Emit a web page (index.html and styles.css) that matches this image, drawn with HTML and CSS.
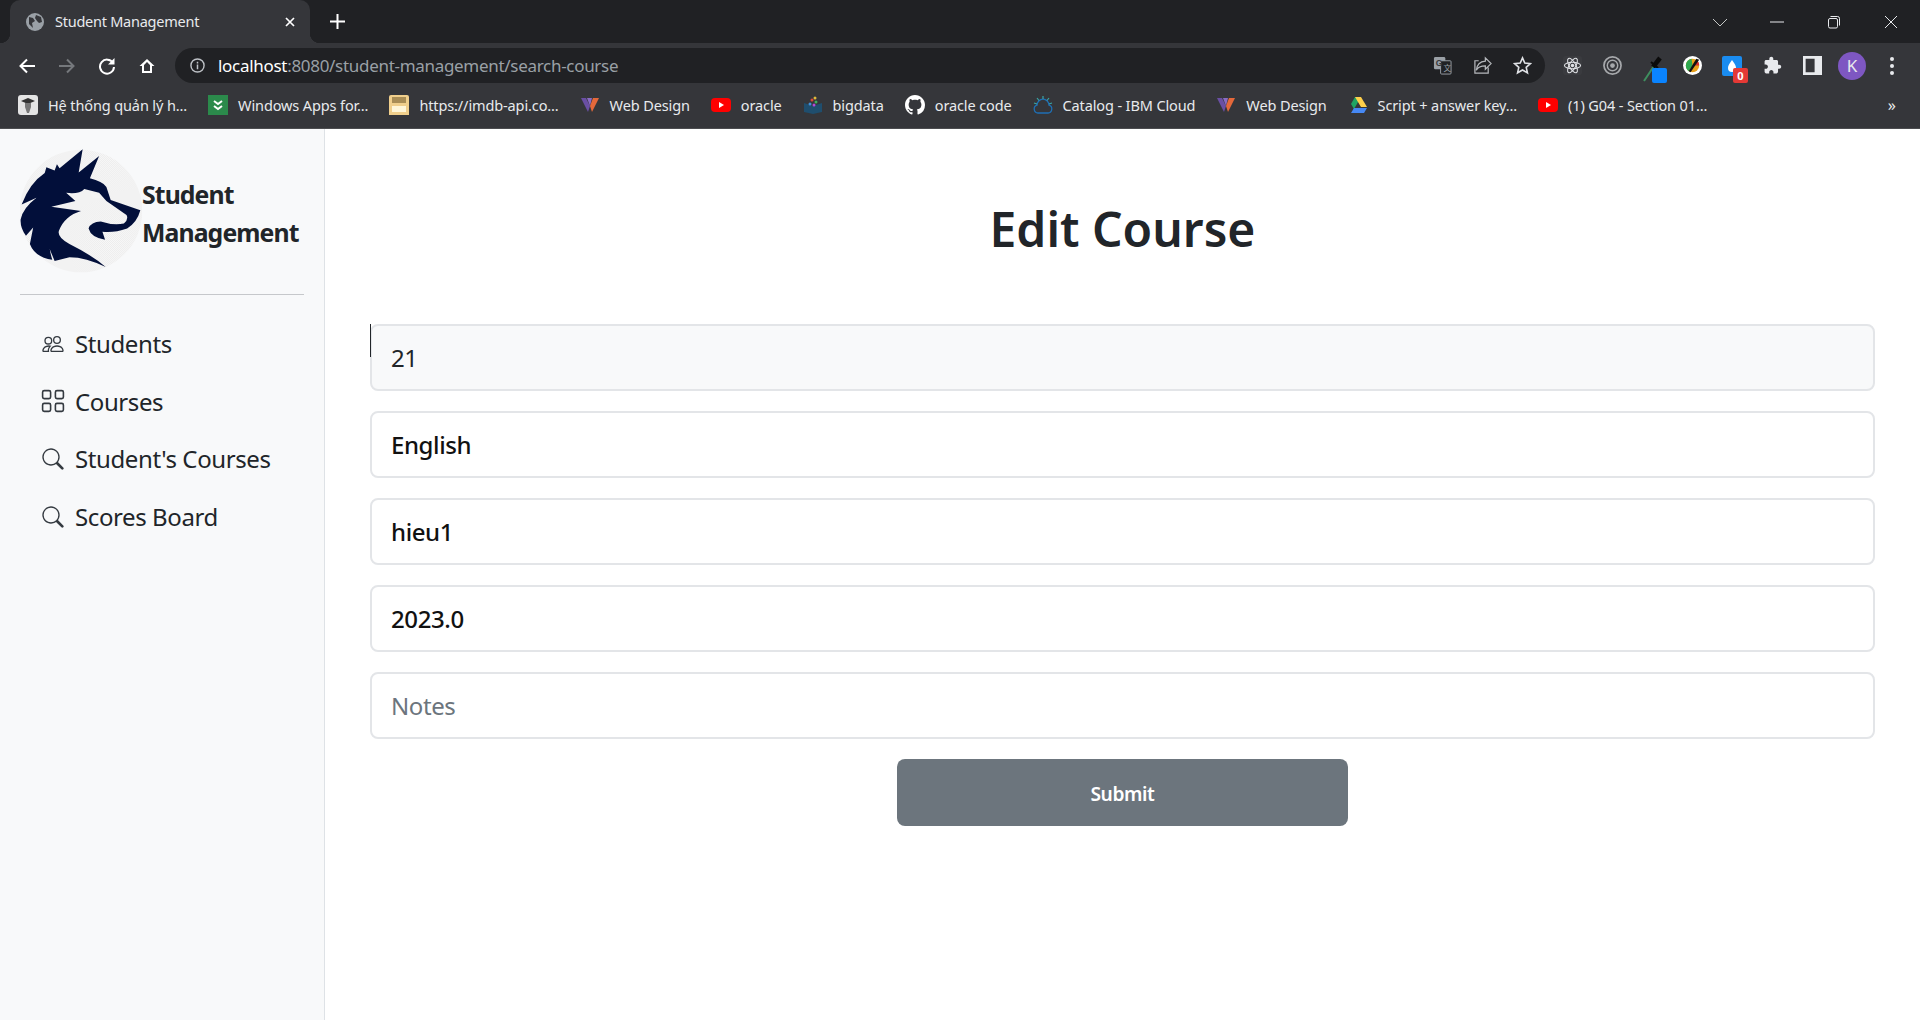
FILE: index.html
```html
<!DOCTYPE html>
<html lang="en">
<head>
<meta charset="utf-8">
<title>Student Management</title>
<link rel="stylesheet" href="styles.css">
</head>
<body>
<header class="chrome">
  <div class="tabstrip">
    <div class="tab">
      <svg class="tab-globe" viewBox="0 0 18 18"><circle cx="9" cy="9" r="9" fill="#9aa0a6"/><path d="M3 4l4 1 2 3-3 2 1 5-4-4zM10 2l5 2 1 5-3 1-2-2-2-3z" fill="#35363a"/></svg>
      <span class="tab-title">Student Management</span>
      <svg class="tab-close" viewBox="0 0 10 10"><path d="M1 1l8 8M9 1l-8 8" stroke="#fff" stroke-width="1.7"/></svg>
    </div>
    <svg class="new-tab" viewBox="0 0 15 15"><path d="M7.5 0v15M0 7.5h15" stroke="#fff" stroke-width="2"/></svg>
    <div class="win-controls">
      <span class="win-slot"><svg class="win-ico" viewBox="0 0 14 14"><path d="M0 4l7 7 7-7" fill="none" stroke="#c4c7c5"/></svg></span>
      <span class="win-slot"><svg class="win-ico" viewBox="0 0 14 14"><path d="M0 7h14" stroke="#e8eaed"/></svg></span>
      <span class="win-slot"><svg class="win-ico" viewBox="0 0 14 14"><rect x="1.500" y="3.500" width="9" height="9.500" rx="1.500" fill="none" stroke="#e8eaed"/><path d="M3.500 1.500h7a2 2 0 0 1 2 2v7" fill="none" stroke="#e8eaed"/></svg></span>
      <span class="win-slot"><svg class="win-ico" viewBox="0 0 14 14"><path d="M1 1l12 12M13 1l-12 12" stroke="#e8eaed"/></svg></span>
    </div>
  </div>
  <div class="toolbar">
    <span class="slot"><svg class="nav-ico" viewBox="0 0 18 18"><path d="M17 9H3M9 2.500L2.500 9 9 15.500" fill="none" stroke="#fff" stroke-width="2"/></svg></span>
    <span class="slot"><svg class="nav-ico" viewBox="0 0 18 18"><path d="M1 9h14M9 2.500L15.500 9 9 15.500" fill="none" stroke="#75787c" stroke-width="2"/></svg></span>
    <span class="slot"><svg class="nav-ico" viewBox="0 0 18 18"><path d="M15 6a7 7 0 1 0 1 4" fill="none" stroke="#fff" stroke-width="2"/><path d="M16.500 1v6.500H10z" fill="#fff"/></svg></span>
    <span class="slot"><svg class="nav-ico" viewBox="0 0 18 18"><path d="M9 2L1.500 9H4v7h10V9h2.500zM6 14V8l3-3 3 3v6z" fill="#fff" fill-rule="evenodd"/></svg></span>
    <div class="omnibox">
      <svg class="info" viewBox="0 0 16 16"><circle cx="8" cy="8" r="7" fill="none" stroke="#bdc1c6" stroke-width="1.500"/><path d="M8 7v5M8 4v1.800" stroke="#bdc1c6" stroke-width="1.600"/></svg>
      <span class="url"><span class="url-host">localhost</span>:8080/student-management/search-course</span>
      <span class="omni-end">
        <span class="slot"><svg class="omni-ico" viewBox="0 0 20 20"><rect x="1" y="1" width="12" height="13" rx="1.500" fill="#9aa0a6"/><rect x="8" y="5" width="11" height="14" rx="1" fill="#202124" stroke="#9aa0a6"/><text class="ico-g" x="3" y="11">G</text><text class="ico-t" x="11" y="16">文</text></svg></span>
        <span class="slot"><svg class="omni-ico" viewBox="0 0 20 20"><path d="M13 2l6 6-6 6v-3.500C8 10.500 5 12 3.500 15 4 10 7 6 13 5.500zM16 12v6H2V5h4" fill="none" stroke="#b5b8bc" stroke-width="1.300"/></svg></span>
        <span class="slot"><svg class="omni-ico" viewBox="0 0 20 20"><path d="M10 2l2.400 5.400 5.900.6-4.400 3.900 1.300 5.800L10 14.700l-5.200 3 1.300-5.800L1.700 8l5.900-.6z" fill="none" stroke="#dfe1e5" stroke-width="1.700"/></svg></span>
      </span>
    </div>
    <span class="slot first-ext"><svg class="ext-ico" viewBox="0 0 20 20"><rect width="20" height="20" rx="3" fill="#3a3b3f"/><g fill="none" stroke="#dfe1e5" stroke-width="1.100"><ellipse cx="10" cy="10" rx="8.500" ry="3.400"/><ellipse cx="10" cy="10" rx="8.500" ry="3.400" transform="rotate(60 10 10)"/><ellipse cx="10" cy="10" rx="8.500" ry="3.400" transform="rotate(120 10 10)"/></g><circle cx="10" cy="10" r="1.800" fill="#dfe1e5"/></svg></span>
    <span class="slot"><svg class="ext-ico" viewBox="0 0 20 20"><g fill="none" stroke="#a6a8ab"><circle cx="10" cy="10" r="9" stroke-width="1.800"/><circle cx="10" cy="10" r="5.500" stroke-width="1.500"/></g><circle cx="10" cy="10" r="2.500" fill="#a6a8ab"/></svg></span>
    <span class="slot"><svg class="dropper" viewBox="0 0 24 28"><path d="M1 25L11 10" stroke="#3f8f5f" stroke-width="2"/><path d="M10 11l7-9" stroke="#0b0b0b" stroke-width="4.500"/><path d="M8 6l7 6" stroke="#0b0b0b" stroke-width="2"/><rect x="9" y="12" width="15" height="15" rx="2" fill="#0a84ff"/></svg></span>
    <span class="slot"><svg class="ext-ico" viewBox="0 0 20 20"><circle cx="10" cy="10" r="10" fill="#fff"/><circle cx="10" cy="10" r="7" fill="#e9a019"/><path d="M3 10a7 7 0 0 1 6-7l1 7-4 6a7 7 0 0 1-3-6z" fill="#2fa84f"/><path d="M10 10l4-6a7 7 0 0 1 3 6z" fill="#d92f2f"/><path d="M6 16l8-13 3 1-9 13z" fill="#111"/></svg></span>
    <span class="slot"><span class="drop-wrap"><svg class="drop-ico" viewBox="0 0 20 20"><rect width="20" height="20" rx="2" fill="#1a8cf0"/><path d="M10 4c3 4 4 6 4 8a4 4 0 0 1-8 0c0-2 1-4 4-8z" fill="#fff"/></svg><span class="badge">0</span></span></span>
    <span class="slot"><svg class="ext-ico" viewBox="0 0 24 24"><path d="M20.500 11H19V7c0-1.100-.9-2-2-2h-4V3.500C13 2.120 11.880 1 10.500 1S8 2.120 8 3.500V5H4c-1.100 0-1.990.9-1.990 2v3.800H3.500c1.490 0 2.700 1.210 2.700 2.700s-1.210 2.700-2.700 2.700H2V20c0 1.100.9 2 2 2h3.800v-1.500c0-1.490 1.210-2.700 2.700-2.700 1.490 0 2.700 1.210 2.700 2.700V22H17c1.100 0 2-.9 2-2v-4h1.500c1.380 0 2.500-1.120 2.500-2.500S21.880 11 20.500 11z" fill="#e8eaed"/></svg></span>
    <span class="slot"><svg class="ext-ico" viewBox="0 0 18 18"><path d="M0 0h18v18H0zM2.500 2.500v13H11v-13z" fill="#e8eaed" fill-rule="evenodd"/></svg></span>
    <span class="slot"><span class="avatar">K</span></span>
    <span class="slot"><svg class="kebab" viewBox="0 0 6 20"><circle cx="3" cy="3" r="2" fill="#e8eaed"/><circle cx="3" cy="10" r="2" fill="#e8eaed"/><circle cx="3" cy="17" r="2" fill="#e8eaed"/></svg></span>
  </div>
  <nav class="bookmarks">
    <a class="bm"><svg class="bm-ico" viewBox="0 0 20 20"><rect width="20" height="20" rx="3" fill="#e4e4e4"/><path d="M3 6l7-3 7 3-7 3z" fill="#333"/><path d="M7 8h6v4l-2 6H9l-2-6z" fill="#777"/></svg><span>Hệ thống quản lý h...</span></a>
    <a class="bm"><svg class="bm-ico" viewBox="0 0 20 20"><rect width="20" height="20" fill="#2b8a4b"/><path d="M6 6l4 3 4-3M6 11l4 3 4-3" fill="none" stroke="#fff" stroke-width="2"/></svg><span>Windows Apps for...</span></a>
    <a class="bm"><svg class="bm-ico" viewBox="0 0 20 20"><rect width="20" height="24" rx="2" fill="#f0cf8c"/><rect x="3" y="2" width="14" height="6" fill="#a98d55"/><rect x="3" y="11" width="14" height="6" fill="#fff6d8"/></svg><span>https://imdb-api.co...</span></a>
    <a class="bm"><svg class="bm-ico" viewBox="0 0 20 20"><path d="M1 3l5 0 4 8-2 6z" fill="#6a4fa3"/><path d="M7 3h5l-2 8z" fill="#8a6cc4"/><path d="M13 3h6l-7 14-2-6z" fill="#e4683a"/></svg><span>Web Design</span></a>
    <a class="bm"><svg class="bm-ico" viewBox="0 0 20 20"><rect y="3" width="20" height="14" rx="4" fill="#f00"/><path d="M8 7l5 3-5 3z" fill="#fff"/></svg><span>oracle</span></a>
    <a class="bm"><svg class="bm-ico" viewBox="0 0 20 20"><path d="M1 8l9 3 9-3v9l-9 2-9-2z" fill="#1f4e6e"/><circle cx="9" cy="5" r="1.500" fill="#d84a3a"/><circle cx="12" cy="3" r="1.500" fill="#e0b93a"/><circle cx="13" cy="7" r="1.500" fill="#3fae5a"/><circle cx="7" cy="9" r="1.500" fill="#3f8fd8"/><circle cx="11" cy="10" r="1.500" fill="#b44ad8"/></svg><span>bigdata</span></a>
    <a class="bm"><svg class="bm-ico" viewBox="0 0 16 16"><path d="M8 0C3.580 0 0 3.580 0 8c0 3.540 2.290 6.530 5.470 7.590.4.070.55-.17.55-.38 0-.19-.01-.82-.01-1.490-2.010.37-2.530-.49-2.690-.94-.09-.23-.48-.94-.82-1.130-.28-.15-.68-.52-.01-.53.630-.01 1.080.58 1.230.82.720 1.210 1.870.87 2.330.66.070-.52.280-.87.510-1.070-1.780-.2-3.640-.89-3.640-3.950 0-.87.310-1.590.820-2.150-.08-.2-.36-1.020.08-2.120 0 0 .67-.21 2.200.82.640-.18 1.320-.27 2-.27.68 0 1.360.09 2 .27 1.530-1.040 2.200-.82 2.200-.82.44 1.100.16 1.920.08 2.120.51.56.82 1.270.82 2.150 0 3.070-1.870 3.750-3.650 3.950.29.25.54.73.54 1.480 0 1.070-.01 1.930-.01 2.200 0 .21.15.46.55.38A8.013 8.013 0 0016 8c0-4.420-3.580-8-8-8z" fill="#fff"/></svg><span>oracle code</span></a>
    <a class="bm"><svg class="bm-ico" viewBox="0 0 20 20"><path d="M5 18h10a4 4 0 0 0 1-7.800A6 6 0 0 0 4 10.200 4 4 0 0 0 5 18z" fill="none" stroke="#1f6fb5" stroke-width="1.300"/><path d="M10 1v3M4 3l2 2.500M16 3l-2 2.500M1 8l3 1M19 8l-3 1" stroke="#3aa6a6" stroke-width="1.200"/></svg><span>Catalog - IBM Cloud</span></a>
    <a class="bm"><svg class="bm-ico" viewBox="0 0 20 20"><path d="M1 3l5 0 4 8-2 6z" fill="#6a4fa3"/><path d="M7 3h5l-2 8z" fill="#8a6cc4"/><path d="M13 3h6l-7 14-2-6z" fill="#e4683a"/></svg><span>Web Design</span></a>
    <a class="bm"><svg class="bm-ico" viewBox="0 0 20 20"><path d="M7 2h6l-7 12-3-5z" fill="#1fa463"/><path d="M7 2h6l6 10h-6z" fill="#ffd04b"/><path d="M6 13h13l-3 5H3z" fill="#4688f4"/></svg><span>Script + answer key...</span></a>
    <a class="bm"><svg class="bm-ico" viewBox="0 0 20 20"><rect y="3" width="20" height="14" rx="4" fill="#f00"/><path d="M8 7l5 3-5 3z" fill="#fff"/></svg><span>(1) G04 - Section 01...</span></a>
    <span class="bm-more">»</span>
  </nav>
</header>
<div class="page">
  <aside class="sidebar">
    <div class="brand">
      <svg class="logo" viewBox="60 55 370 380">
        <defs><pattern id="chk" width="6" height="6" patternUnits="userSpaceOnUse"><rect width="6" height="6" fill="#f8f8f8"/><rect width="3" height="3" fill="#ececec"/><rect x="3" y="3" width="3" height="3" fill="#ececec"/></pattern></defs>
        <circle cx="245" cy="245" r="186" fill="url(#chk)"/>
        <path d="M250 58L238 128 300 78 272 146Q310 155 322 172L335 212 425 243Q415 280 385 298 345 312 310 308L318 332Q275 325 268 298 275 278 305 277 345 290 375 283 390 270 383 257L322 215 300 190 255 178Q240 195 200 190L228 215 155 232 245 245Q195 260 178 305 172 325 210 345 280 380 320 415 260 385 210 385L165 397 150 360Q155 385 158 393 105 385 90 345L100 295 78 320Q60 295 62 270 70 235 110 205L65 225Q90 160 135 130L140 112 165 122 172 103 180 115Z" fill="#020f3a"/>
        <path d="M275 188L315 208 280 205Z" fill="#f4f4f4"/>
      </svg>
      <span class="brand-name">Student Management</span>
    </div>
    <hr class="rule">
    <ul class="menu">
      <li class="menu-item"><svg class="menu-ico" viewBox="-1 -1 18 18"><path d="M15 14s1 0 1-1-1-4-5-4-5 3-5 4 1 1 1 1h8Zm-7.978-1A.261.261 0 0 1 7 12.996c.001-.264.167-1.030.76-1.720C8.312 10.629 9.282 10 11 10c1.717 0 2.687.63 3.240 1.276.593.69.758 1.457.76 1.720l-.008.002a.274.274 0 0 1-.014.002H7.022ZM11 7a2 2 0 1 0 0-4 2 2 0 0 0 0 4Zm3-2a3 3 0 1 1-6 0 3 3 0 0 1 6 0ZM6.936 9.280a5.880 5.880 0 0 0-1.230-.247A7.350 7.350 0 0 0 5 9c-4 0-5 3-5 4 0 .667.333 1 1 1h4.216A2.238 2.238 0 0 1 5 13c0-1.010.377-2.042 1.090-2.904.243-.294.526-.569.846-.816ZM4.920 10A5.493 5.493 0 0 0 4 13H1c0-.26.164-1.030.76-1.724.545-.636 1.492-1.256 3.160-1.275ZM1.500 5.500a3 3 0 1 1 6 0 3 3 0 0 1-6 0Zm3-2a2 2 0 1 0 0 4 2 2 0 0 0 0-4Z"/></svg><span>Students</span></li>
      <li class="menu-item"><svg class="menu-ico" viewBox="0.5 0.5 15 15"><path d="M1 2.500A1.500 1.500 0 0 1 2.500 1h3A1.500 1.500 0 0 1 7 2.500v3A1.500 1.500 0 0 1 5.500 7h-3A1.500 1.500 0 0 1 1 5.500v-3zM2.500 2a.5.5 0 0 0-.5.5v3a.5.5 0 0 0 .5.5h3a.5.5 0 0 0 .5-.5v-3a.5.5 0 0 0-.5-.5h-3zm6.500.5A1.500 1.500 0 0 1 10.500 1h3A1.500 1.500 0 0 1 15 2.500v3A1.500 1.500 0 0 1 13.500 7h-3A1.500 1.500 0 0 1 9 5.500v-3zm1.500-.5a.5.5 0 0 0-.5.5v3a.5.5 0 0 0 .5.5h3a.5.5 0 0 0 .5-.5v-3a.5.5 0 0 0-.5-.5h-3zM1 10.500A1.500 1.500 0 0 1 2.500 9h3A1.500 1.500 0 0 1 7 10.500v3A1.500 1.500 0 0 1 5.500 15h-3A1.500 1.500 0 0 1 1 13.500v-3zm1.500-.5a.5.5 0 0 0-.5.5v3a.5.5 0 0 0 .5.5h3a.5.5 0 0 0 .5-.5v-3a.5.5 0 0 0-.5-.5h-3zm6.500.5A1.500 1.500 0 0 1 10.500 9h3a1.500 1.500 0 0 1 1.500 1.500v3a1.500 1.500 0 0 1-1.500 1.500h-3A1.500 1.500 0 0 1 9 13.500v-3zm1.500-.5a.5.5 0 0 0-.5.5v3a.5.5 0 0 0 .5.5h3a.5.5 0 0 0 .5-.5v-3a.5.5 0 0 0-.5-.5h-3z"/></svg><span>Courses</span></li>
      <li class="menu-item"><svg class="menu-ico" viewBox="-1 -1 18 18"><path d="M11.742 10.344a6.500 6.500 0 1 0-1.397 1.398h-.001c.03.04.062.078.098.115l3.850 3.850a1 1 0 0 0 1.415-1.414l-3.850-3.850a1.007 1.007 0 0 0-.115-.1zM12 6.500a5.500 5.500 0 1 1-11 0 5.500 5.500 0 0 1 11 0z"/></svg><span>Student's Courses</span></li>
      <li class="menu-item"><svg class="menu-ico" viewBox="-1 -1 18 18"><path d="M11.742 10.344a6.500 6.500 0 1 0-1.397 1.398h-.001c.03.04.062.078.098.115l3.850 3.850a1 1 0 0 0 1.415-1.414l-3.850-3.850a1.007 1.007 0 0 0-.115-.1zM12 6.500a5.500 5.500 0 1 1-11 0 5.500 5.500 0 0 1 11 0z"/></svg><span>Scores Board</span></li>
    </ul>
  </aside>
  <main class="content">
    <h1 class="title">Edit Course</h1>
    <form class="course-form">
      <span class="field-wrap"><span class="caret"></span><input class="field field-readonly" value="21" readonly></span>
      <input class="field" value="English">
      <input class="field" value="hieu1">
      <input class="field" value="2023.0">
      <input class="field" placeholder="Notes">
      <button class="submit" type="button">Submit</button>
    </form>
  </main>
</div>
</body>
</html>
```

FILE: styles.css
```css
* { box-sizing: border-box; }
html, body { margin: 0; height: 100%; overflow: hidden; }
body { display: flex; flex-direction: column; height: 1020px; font-family: "Noto Sans", "Open Sans", sans-serif; background: #fff; color: #212529; }

/* browser chrome */
.chrome { flex: none; background: #35363a; color: #e8eaed; }
.tabstrip { height: 43px; background: #202124; display: flex; align-items: center; padding-left: 10px; }
.tab { position: relative; width: 300px; height: 43px; background: #35363a; border-radius: 10px 10px 0 0; display: flex; align-items: center; padding: 0 15px 0 16px; }
.tab::before, .tab::after { content: ""; position: absolute; bottom: 0; width: 10px; height: 10px; }
.tab::before { left: -10px; background: radial-gradient(circle at 0 0, #202124 10px, #35363a 10.5px); }
.tab::after { right: -10px; background: radial-gradient(circle at 100% 0, #202124 10px, #35363a 10.5px); }
.tab-globe { width: 18px; height: 18px; flex: none; margin-right: 11px; }
.tab-title { flex: 1; font-size: 14.5px; letter-spacing: -0.25px; color: #e8eaed; white-space: nowrap; padding-bottom: 2px; }
.tab-close { width: 10px; height: 10px; flex: none; }
.new-tab { width: 15px; height: 15px; margin-left: 20px; }
.win-controls { margin-left: auto; margin-right: 1px; display: flex; }
.win-slot { width: 57px; height: 36px; display: flex; align-items: center; justify-content: center; }
.win-ico { width: 14px; height: 14px; }

.toolbar { height: 41px; display: flex; align-items: center; padding: 5px 0 1px 7px; }
.slot { width: 40px; height: 35px; flex: none; display: flex; align-items: center; justify-content: center; }
.nav-ico { width: 18px; height: 18px; }
.omnibox { width: 1370px; height: 35px; margin-left: 8px; border-radius: 18px; background: #202124; display: flex; align-items: center; padding: 0 3px 0 15px; flex: none; }
.info { width: 15px; height: 15px; flex: none; margin-right: 13px; }
.url { font-size: 17px; letter-spacing: -0.3px; color: #9aa0a6; white-space: nowrap; }
.url-host { color: #fff; }
.omni-end { margin-left: auto; display: flex; }
.omni-ico { width: 19px; height: 19px; }
.ico-g { font-size: 9px; font-weight: 700; fill: #35363a; font-family: "Liberation Sans", sans-serif; }
.ico-t { font-size: 8px; fill: #9aa0a6; font-family: "Noto Sans CJK SC", sans-serif; }
.first-ext { margin-left: 7px; }
.ext-ico { width: 19px; height: 19px; }
.dropper { width: 24px; height: 28px; margin: 8px 0 0 5px; flex: none; }
.drop-wrap { position: relative; width: 20px; height: 20px; display: block; }
.drop-ico { width: 20px; height: 20px; display: block; }
.badge { position: absolute; right: -6px; bottom: -7px; width: 15px; height: 15px; border-radius: 2px; background: #e53935; color: #fff; font-size: 11px; font-weight: 700; line-height: 15px; text-align: center; }
.avatar { width: 28px; height: 28px; border-radius: 50%; background: #7e57c2; color: #e8eaed; font-size: 17px; line-height: 28px; text-align: center; }
.kebab { width: 6px; height: 20px; }

.bookmarks { height: 45px; border-bottom: 1px solid #4c4d50; display: flex; align-items: center; padding: 0 0 2px 18px; gap: 21px; }
.bm { display: flex; align-items: center; gap: 10px; font-size: 14.5px; letter-spacing: -0.12px; color: #e8eaed; white-space: nowrap; }
.bm-ico { width: 20px; height: 20px; flex: none; }
.bm-more { margin-left: auto; margin-right: 24px; font-size: 16px; color: #e8eaed; }

/* app */
.page { flex: 1; min-height: 0; display: flex; }
.sidebar { width: 325px; flex: none; background: #f8f9fa; border-right: 1px solid #dee2e6; padding: 19px 20px 0 20px; }
.brand { display: flex; align-items: center; }
.logo { width: 122px; height: 126px; flex: none; }
.brand-name { font-size: 24.800px; line-height: 38.400px; font-weight: 700; letter-spacing: -0.9px; color: #212529; padding-top: 4px; }
.rule { border: 0; border-top: 1px solid #c6c8cb; margin: 20px 0 0; }
.menu { list-style: none; margin: 20px 0 0; padding: 0; }
.menu-item { display: flex; align-items: center; gap: 10px; height: 57.600px; padding-left: 21px; font-size: 24px; letter-spacing: -0.4px; color: #212529; }
.menu-ico { width: 24px; height: 24px; flex: none; fill: #343a40; }

.content { flex: 1; min-width: 0; padding: 71px 45px 0 45px; }
.title { margin: 0; height: 66px; line-height: 58px; text-align: center; font-size: 48px; font-weight: 600; color: #212529; }
.course-form { margin-top: 58px; display: flex; flex-direction: column; gap: 20px; align-items: center; }
.field-wrap { position: relative; width: 100%; display: block; }
.caret { position: absolute; left: 0; top: 0; width: 1px; height: 33px; background: #212529; }
.field { display: block; width: 100%; height: 67px; padding: 0 19px; border: 2px solid #e3e5e8; border-radius: 8px; background: #fff; font: 500 24px "Noto Sans", "Open Sans", sans-serif; letter-spacing: -0.4px; color: #111; outline: none; }
.field-readonly { background: #f8f9fa; color: #212529; font-weight: 400; }
.field::placeholder { color: #6c757d; font-weight: 400; opacity: 1; }
.submit { width: 451px; height: 67px; padding-top: 2px; border: 0; border-radius: 8px; background: #6c757d; color: #fff; font: 600 19.200px "Noto Sans", "Open Sans", sans-serif; letter-spacing: -0.4px; }
```
